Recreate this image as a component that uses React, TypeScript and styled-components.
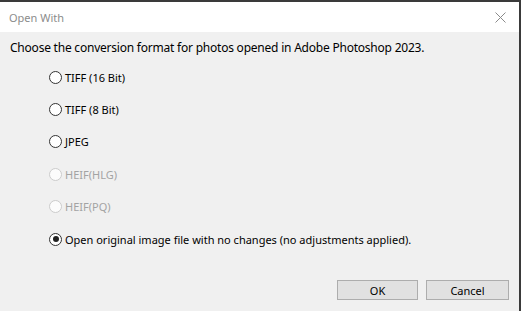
import {createGlobalStyle} from 'styled-components'
import styled from 'styled-components'

const GlobalStyle = createGlobalStyle`
  html, body {
    margin: 0;
    padding: 0;
    background: #f0f0f0;
  }
`

const Window = styled.div`
  width: 521px;
  height: 311px;
  box-sizing: border-box;
  display: flex;
  flex-direction: column;
  background: #f0f0f0;
  border-top: 2px solid #3a3a3a;
  border-right: 2px solid #3a3a3a;
  font-family: "Noto Sans", "Open Sans", sans-serif;
  font-size: 11px;
  color: #000;
  overflow: hidden;
`

const TitleBar = styled.div`
  height: 30px;
  flex: none;
  display: flex;
  align-items: center;
  justify-content: space-between;
  background: #fff;
  padding: 0 0 0 9px;
`

const Title = styled.span`
  color: #8c8c8c;
  font-size: 11px;
`

const CloseButton = styled.button`
  width: 38px;
  height: 30px;
  border: 0;
  background: transparent;
  display: flex;
  align-items: center;
  justify-content: center;
  padding: 0;
`

const Body = styled.div`
  flex: 1;
  display: flex;
  flex-direction: column;
  padding: 8px 10px 11px 10px;
`

const Prompt = styled.p`
  margin: 0;
  font-size: 12px;
  letter-spacing: -0.22px;
  line-height: 16px;
`

const Options = styled.div`
  display: flex;
  flex-direction: column;
  margin: 5px 0 0 39px;
`

const Option = styled.label<{ disabled?: boolean }>`
  height: 32.4px;
  display: flex;
  align-items: center;
  gap: 3px;
  color: ${p => (p.disabled ? '#a3a3a3' : '#000')};
`

const Dot = styled.span<{ disabled?: boolean; checked?: boolean }>`
  position: relative;
  width: 13px;
  height: 13px;
  box-sizing: border-box;
  border-radius: 50%;
  border: 1px solid ${p => (p.disabled ? '#cccccc' : '#333')};
  background: ${p => (p.disabled ? '#fcfcfc' : '#fff')};

  &::after {
    content: "";
    display: ${p => (p.checked ? 'block' : 'none')};
    position: absolute;
    top: 2.5px;
    left: 2.5px;
    width: 6px;
    height: 6px;
    border-radius: 50%;
    background: #222;
  }
`

const Footer = styled.div`
  margin-top: auto;
  display: flex;
  justify-content: flex-end;
  gap: 8px;
`

const Button = styled.button<{ w: number }>`
  width: ${p => p.w}px;
  height: 20px;
  box-sizing: border-box;
  border: 1px solid #adadad;
  background: #e1e1e1;
  font-family: inherit;
  font-size: 11px;
  color: #000;
  padding: 0;
`

const options = [
    {label: 'TIFF (16 Bit)'},
    {label: 'TIFF (8 Bit)'},
    {label: 'JPEG'},
    {label: 'HEIF(HLG)', disabled: true},
    {label: 'HEIF(PQ)', disabled: true},
    {label: 'Open original image file with no changes (no adjustments applied).', checked: true},
]

export default function App() {
    return (
        <>
            <GlobalStyle/>
            <Window>
                <TitleBar>
                    <Title>Open With</Title>
                    <CloseButton aria-label="Close">
                        <svg width="11" height="11" viewBox="0 0 11 11">
                            <path d="M0.5 0.5 L10.5 10.5 M10.5 0.5 L0.5 10.5" stroke="#8a8a8a" strokeWidth="1"/>
                        </svg>
                    </CloseButton>
                </TitleBar>
                <Body>
                    <Prompt>Choose the conversion format for photos opened in Adobe Photoshop 2023.</Prompt>
                    <Options>
                        {options.map(o => (
                            <Option key={o.label} disabled={o.disabled}>
                                <Dot disabled={o.disabled} checked={o.checked}/>
                                {o.label}
                            </Option>
                        ))}
                    </Options>
                    <Footer>
                        <Button w={81}>OK</Button>
                        <Button w={83}>Cancel</Button>
                    </Footer>
                </Body>
            </Window>
        </>
    )
}
